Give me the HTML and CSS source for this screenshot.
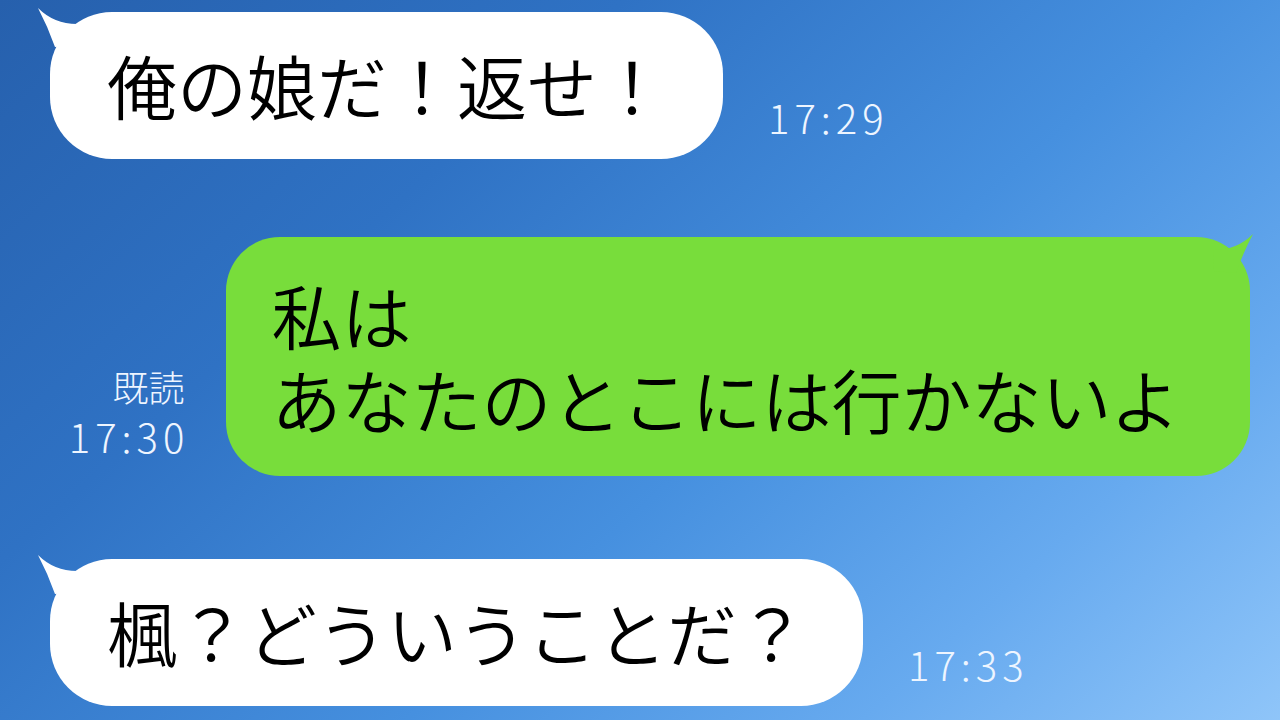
FILE: index.html
```html
<!DOCTYPE html>
<html lang="ja">
<head>
<meta charset="utf-8">
<title>Chat</title>
<link rel="stylesheet" href="styles.css">
</head>
<body>
<main class="chat">
  <div class="row row-in row-1">
    <div class="bubble bubble-white">
      <svg class="tail tail-left" viewBox="0 0 50 50" width="50" height="50"><path d="M2,3 Q18,19 41,19 L42,40 L19,42 Q12,22 2,3 Z" fill="#ffffff"/></svg>
      <p class="msg">俺の娘だ！返せ！</p>
    </div>
    <div class="meta"><span class="time">17:29</span></div>
  </div>

  <div class="row row-out">
    <div class="meta meta-out">
      <span class="read">既読</span>
      <span class="time">17:30</span>
    </div>
    <div class="bubble bubble-green">
      <svg class="tail tail-right" viewBox="0 0 50 50" width="50" height="50"><path d="M2,3 Q18,19 41,19 L42,40 L19,42 Q12,22 2,3 Z" fill="#78dd3b"/></svg>
      <p class="msg">私は<br>あなたのとこには行かないよ</p>
    </div>
  </div>

  <div class="row row-in row-3">
    <div class="bubble bubble-white">
      <svg class="tail tail-left" viewBox="0 0 50 50" width="50" height="50"><path d="M2,3 Q18,19 41,19 L42,40 L19,42 Q12,22 2,3 Z" fill="#ffffff"/></svg>
      <p class="msg">楓？どういうことだ？</p>
    </div>
    <div class="meta"><span class="time">17:33</span></div>
  </div>
</main>
</body>
</html>
```
FILE: styles.css
```css
* { box-sizing: border-box; }
html, body { margin: 0; padding: 0; }
body {
  width: 1280px;
  height: 720px;
  overflow: hidden;
  font-family: "Noto Sans CJK JP", "Noto Sans", sans-serif;
  background: linear-gradient(138deg, #2660ad 0%, #2f72c4 30%, #4690df 58%, #67aaef 80%, #8fc5f9 100%);
}
.chat {
  display: flex;
  flex-direction: column;
  padding-top: 12px;
}
.row {
  display: flex;
  align-items: flex-end;
}
.row-in { padding-left: 50px; }
.row-out {
  justify-content: flex-end;
  padding-right: 30px;
  margin-top: 78px;
}
.row-3 { margin-top: 83px; }

.bubble {
  position: relative;
  color: #000;
}
.bubble-white {
  background: #ffffff;
  border-radius: 62px;
  padding: 31px 56px 32px 57px;
}
.bubble-green {
  background: #78dd3b;
  border-radius: 54px;
  padding: 36px 70px 35px 45px;
}
.msg {
  margin: 0;
  font-size: 70px;
  line-height: 84px;
  font-weight: 350;
  white-space: nowrap;
}
.tail {
  position: absolute;
  top: -7px;
}
.tail-left { left: -14px; }
.tail-right { right: -5px; top: -6px; transform: scaleX(-1); }

.meta {
  display: flex;
  flex-direction: column;
  color: #eef5ff;
  margin-left: 45px;
  margin-bottom: 22px;
}
.meta-out {
  align-items: flex-end;
  margin-left: 0;
  margin-right: 42px;
  margin-bottom: 20px;
}
.time {
  font-size: 40px;
  line-height: 40px;
  font-weight: 300;
  letter-spacing: 5px;
}
.meta-out .time { margin-right: -5px; }
.read {
  font-size: 36px;
  line-height: 44px;
  font-weight: 300;
  margin-bottom: 8px;
}
```
